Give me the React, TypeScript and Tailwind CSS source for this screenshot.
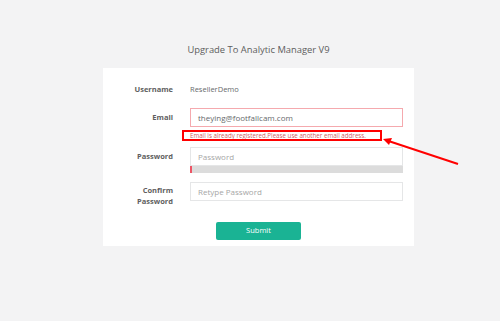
export default function App() {
  return (
    <div
      className="relative h-[321px] w-[500px] overflow-hidden bg-[#f3f3f4]"
      style={{ fontFamily: '"Open Sans", "Liberation Sans", sans-serif' }}
    >
      <div className="ml-[103px] flex w-[311px] flex-col pt-[43px]">
        {/* Title */}
        <h1 className="text-center text-[9.4px] leading-[14px] text-[#5e5e5e]">
          Upgrade To Analytic Manager V9
        </h1>

        {/* Card */}
        <div className="mt-[11px] flex h-[178px] flex-col bg-white pr-[11px] pt-[16px]">
          {/* Username */}
          <div className="flex items-center gap-x-[17px]">
            <span className="w-[70px] text-right text-[7.5px] font-bold leading-[10px] text-[#5e5e5e]">
              Username
            </span>
            <span className="text-[7.5px] leading-[10px] text-[#676a6c]">ResellerDemo</span>
          </div>

          {/* Email */}
          <div className="mt-[14px] flex items-center gap-x-[17px]">
            <span className="w-[70px] text-right text-[7.5px] font-bold text-[#5e5e5e]">Email</span>
            <div className="flex h-[19px] flex-1 items-center border border-[#f5a9ae] px-[7px] text-[8px] text-[#676a6c]">
              theying@footfallcam.com
            </div>
          </div>
          <div className="mt-[3px] flex gap-x-[17px]">
            <span className="w-[70px]" />
            <span className="text-[6.2px] leading-[11px] text-[#d05a62]">
              Email is already registered.Please use another email address.
            </span>
          </div>

          {/* Password */}
          <div className="mt-[6px] flex gap-x-[17px]">
            <span className="w-[70px] pt-[4px] text-right text-[7.5px] font-bold text-[#5e5e5e]">
              Password
            </span>
            <div className="flex flex-1 flex-col">
              <div className="flex h-[19px] items-center border border-[#e5e6e7] px-[7px] text-[8px] text-[#a6a6a6]">
                Password
              </div>
              <div className="flex h-[7px] bg-[#dcdcdc]">
                <div className="w-[2px] bg-[#ed5565]" />
              </div>
            </div>
          </div>

          {/* Confirm Password */}
          <div className="mt-[9px] flex gap-x-[17px]">
            <span className="w-[70px] pt-[3px] text-right text-[7.5px] font-bold leading-[11px] text-[#5e5e5e]">
              Confirm
              <br />
              Password
            </span>
            <div className="flex h-[19px] flex-1 items-center border border-[#e5e6e7] px-[7px] text-[8px] text-[#a6a6a6]">
              Retype Password
            </div>
          </div>

          {/* Submit */}
          <div className="mt-[15px] flex pl-[113px]">
            <button className="h-[18px] w-[85px] rounded-[2px] bg-[#1ab394] text-[7.5px] text-white">
              Submit
            </button>
          </div>
        </div>
      </div>

      {/* Annotation box */}
      <div className="absolute left-[182px] top-[130px] h-[11px] w-[200px] border-2 border-[#ff0000]" />

      {/* Annotation arrow */}
      <svg className="absolute left-0 top-0" width="500" height="321" viewBox="0 0 500 321">
        <line x1="458" y1="164" x2="390" y2="141.5" stroke="#ff0000" strokeWidth="2" />
        <polygon points="383,139 392,138 389,145" fill="#ff0000" />
      </svg>
    </div>
  )
}
